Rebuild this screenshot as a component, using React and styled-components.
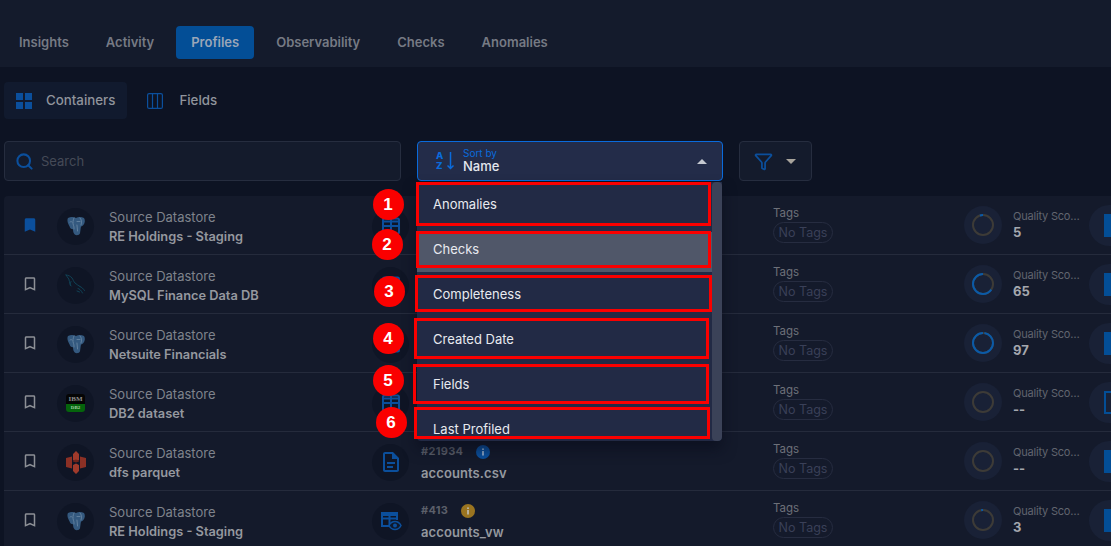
import React from "react";
import styled, { createGlobalStyle } from "styled-components";
import { Search, Funnel } from "lucide-react";

const GlobalStyle = createGlobalStyle`
  html, body {
    margin: 0;
    height: 100%;
    overflow: hidden;
    background: #0d1323;
  }
  * { box-sizing: border-box; }
`;

const tabs = ["Insights", "Activity", "Profiles", "Observability", "Checks", "Anomalies"];
const sortOptions = ["Anomalies", "Checks", "Completeness", "Created Date", "Fields", "Last Profiled"];

const rows = [
  { name: "RE Holdings - Staging", logo: "postgres", icon: "table", score: 5, saved: true },
  { name: "MySQL Finance Data DB", logo: "mysql", icon: "table", score: 65 },
  { name: "Netsuite Financials", logo: "postgres", icon: "table", score: 97 },
  { name: "DB2 dataset", logo: "db2", icon: "table", score: 0, empty: true, outlined: true },
  { name: "dfs parquet", logo: "s3", icon: "file", score: 0, empty: true, id: "#21934", file: "accounts.csv", info: "#0b4f9c" },
  { name: "RE Holdings - Staging", logo: "postgres", icon: "view", score: 3, id: "#413", file: "accounts_vw", info: "#9a7420" },
];

// red annotation boxes and number badges drawn on top of the screenshot
const marks = [
  { n: 1, x: 416, y: 182, w: 295, h: 44, cx: 388, cy: 204 },
  { n: 2, x: 416, y: 231, w: 295, h: 37, cx: 387, cy: 244 },
  { n: 3, x: 415, y: 275, w: 297, h: 37, cx: 389, cy: 291 },
  { n: 4, x: 414, y: 318, w: 295, h: 41, cx: 388, cy: 338 },
  { n: 5, x: 413, y: 364, w: 296, h: 40, cx: 388, cy: 380 },
  { n: 6, x: 414, y: 407, w: 296, h: 32, cx: 391, cy: 422 },
];

const BookmarkIcon = ({ filled }) => (
  <svg width="18" height="18" viewBox="0 0 24 24" fill={filled ? "#0b4f9c" : "#8d9096"}>
    {filled ? (
      <path d="M17 3H7c-1.100 0-2 .9-2 2v16l7-3 7 3V5c0-1.100-.9-2-2-2z" />
    ) : (
      <path d="M17 3H7c-1.100 0-2 .9-2 2v16l7-3 7 3V5c0-1.100-.9-2-2-2zm0 15l-5-2.180L7 18V5h10v13z" />
    )}
  </svg>
);

const PostgresLogo = () => (
  <svg width="20" height="20" viewBox="0 0 20 20">
    <path
      d="M2 2C5 .5 8 1 10 2c2-1 5-1.500 8 0 1.500 2 1 5.500-1 7.500l-1.500.8c-.5.3-.7 1-.8 2l-.7 5c-.5 2-4 2.500-5.500 1-1-1-1.500-3-1.500-5-2 0-3-1-3.500-3C2.500 8 .5 5 2 2z"
      fill="#34597f"
    />
    <path
      d="M8 2C7 4 6.500 7 7.500 9.500c.4 1 .5 2 .5 3.500M14 2c1.500 1.500 2 4 1 7M11 5.500h3M4 6c.8-.5 1.500-.5 2 0M11 9c.5 2 0 4 .5 6"
      fill="none"
      stroke="#6d8aa6"
      strokeWidth="0.8"
      strokeLinecap="round"
    />
  </svg>
);

const MysqlLogo = () => (
  <svg width="24" height="24" viewBox="0 0 24 24" fill="none" stroke="#10465a" strokeWidth="0.9" strokeLinecap="round">
    <path d="M2 2c2.500.2 4.500 1.200 6 3 1.200 1.600 1.500 3.500 3 5 1.500 1.600 3.500 2.300 5 3.500" />
    <path d="M2 2c.5 1.500 2 2.500 2.800 4 .8 1.700.6 3.500 1.200 5.200.3.800.7 1.300 1.200 1.800" />
    <path d="M7 8.500c-.6 1.300-.8 2.500-.6 3.800M16 13.500c1.600.7 3.200 2 4.500 4M14 15.500c1.500.4 3 1.500 4.500 4.500M13 18l2.500 1" />
  </svg>
);

const S3Logo = () => (
  <svg width="20" height="23" viewBox="0 0 20 23">
    <path d="M0 7l6-1.500v12L0 16z" fill="#8b3025" />
    <path d="M20 7l-6-1.500v12l6-1.500z" fill="#8b3025" />
    <path d="M7 3l3-3 3 3v6l-3 1.500L7 9zM7 14l3-1.500 3 1.500v6l-3 3-3-3z" fill="#a03a2b" />
    <path d="M7 9.500l3-1 3 1v1l-3 1-3-1z" fill="#6f241b" />
  </svg>
);

const TableIcon = () => (
  <svg width="20" height="18" viewBox="0 0 20 18" fill="none" stroke="#0b4f9c" strokeWidth="2">
    <rect x="2" y="1.500" width="16" height="15" rx="1.500" />
    <path d="M2 9h16M10 1.500v15M2 4.500h16" />
  </svg>
);

const ViewTableIcon = () => (
  <svg width="22" height="20" viewBox="0 0 22 20">
    <g fill="none" stroke="#0b4f9c" strokeWidth="2">
      <path d="M9 15H2V2h15v7" />
      <path d="M2 7.500h15M9.500 2v13M2 4h15" />
    </g>
    <path d="M15 10.500c-3 0-5 2-6 4 1 2 3 4 6 4s5-2 6-4c-1-2-3-4-6-4z" fill="#10192c" stroke="#0b4f9c" strokeWidth="1.500" />
    <circle cx="15" cy="14.500" r="2" fill="#0b4f9c" />
  </svg>
);

const FileIcon = () => (
  <svg width="24" height="24" viewBox="0 0 24 24" fill="#0b4f9c">
    <path d="M8 16h6v2H8zm0-4h8v2H8zm6-10H6c-1.100 0-2 .9-2 2v16c0 1.100.89 2 1.990 2H18c1.100 0 2-.9 2-2V8l-6-6zm4 18H6V4h7v5h5v11z" />
  </svg>
);

const InfoIcon = ({ color }) => (
  <svg width="14" height="14" viewBox="0 0 14 14">
    <circle cx="7" cy="7" r="7" fill={color} />
    <rect x="6.200" y="6" width="1.600" height="4.500" fill="#c9d3e0" opacity="0.8" />
    <rect x="6.200" y="3.400" width="1.600" height="1.600" fill="#c9d3e0" opacity="0.8" />
  </svg>
);

const ScoreRing = ({ score }) => {
  const length = 2 * Math.PI * 10;
  return (
    <svg width="24" height="24" viewBox="0 0 24 24" fill="none" strokeWidth="2">
      <circle cx="12" cy="12" r="10" stroke="#3d3b37" />
      <circle
        cx="12"
        cy="12"
        r="10"
        stroke="#0a5aa8"
        strokeDasharray={`${(length * score) / 100} ${length}`}
        transform="rotate(-90 12 12) scale(1 -1) translate(0 -24)"
      />
    </svg>
  );
};

const Db2Box = () => (
  <Db2Wrap>
    <Db2Top>IBM</Db2Top>
    <Db2Bottom>DB2</Db2Bottom>
  </Db2Wrap>
);

const logos = {
  postgres: <PostgresLogo />,
  mysql: <MysqlLogo />,
  s3: <S3Logo />,
  db2: <Db2Box />,
};

const icons = {
  table: <TableIcon />,
  file: <FileIcon />,
  view: <ViewTableIcon />,
};

const App = () => {
  return (
    <Page>
      <GlobalStyle />
      <Nav>
        {tabs.map((t) => (
          <Tab key={t} $active={t === "Profiles"}>
            {t}
          </Tab>
        ))}
      </Nav>

      <SubTabs>
        <SubTab $active>
          <svg width="16" height="16" viewBox="0 0 16 16" fill="#0b4f9c">
            <path d="M0 0h7v7H0zM9 0h7v7H9zM0 9h7v7H0zM9 9h7v7H9z" />
          </svg>
          <SubTabLabel>Containers</SubTabLabel>
        </SubTab>
        <SubTab>
          <svg width="16" height="16" viewBox="0 0 16 16" fill="none" stroke="#0b4f9c" strokeWidth="1.200">
            <rect x="0.600" y="0.600" width="14.800" height="14.800" rx="1.500" />
            <path d="M5.500 0.600v14.800M10.500 0.600v14.800" />
          </svg>
          <SubTabLabel>Fields</SubTabLabel>
        </SubTab>
      </SubTabs>

      <Toolbar>
        <SearchBox>
          <Search size={19} color="#0b4f9c" strokeWidth={2.6} />
          <SearchText>Search</SearchText>
        </SearchBox>
        <SortWrap>
          <SortSelect>
            <AzIcon>
              <AzLetters>
                <span>A</span>
                <span>Z</span>
              </AzLetters>
              <svg width="7" height="18" viewBox="0 0 7 18" fill="none" stroke="#0a6bdc" strokeWidth="1.500">
                <path d="M3.500 0v16.500M0.500 13.500l3 3 3-3" />
              </svg>
            </AzIcon>
            <SortLabels>
              <SortSmall>Sort by</SortSmall>
              <SortValue>Name</SortValue>
            </SortLabels>
            <Caret $up />
          </SortSelect>
          <Menu>
            <MenuList>
              {sortOptions.map((o) => (
                <MenuItem key={o} $active={o === "Checks"}>
                  {o}
                </MenuItem>
              ))}
            </MenuList>
            <ScrollTrack />
          </Menu>
        </SortWrap>
        <FilterButton>
          <Funnel size={19} color="#0b4f9c" strokeWidth={2.2} />
          <Caret />
        </FilterButton>
      </Toolbar>

      <List>
        {rows.map((r, i) => (
          <Row key={i}>
            <BookmarkCell>
              <BookmarkIcon filled={r.saved} />
            </BookmarkCell>
            <LogoCircle>{logos[r.logo]}</LogoCircle>
            <Source>
              <SourceLabel>Source Datastore</SourceLabel>
              <SourceName>{r.name}</SourceName>
            </Source>
            <LogoCircle>{icons[r.icon]}</LogoCircle>
            <Container>
              {r.id && (
                <>
                  <IdLine>
                    {r.id}
                    <InfoIcon color={r.info} />
                  </IdLine>
                  <FileName>{r.file}</FileName>
                </>
              )}
            </Container>
            <TagsCell>
              <TagsLabel>Tags</TagsLabel>
              <TagPill>No Tags</TagPill>
            </TagsCell>
            <RingCircle>
              <ScoreRing score={r.score} />
            </RingCircle>
            <Quality>
              <QualityLabel>Quality Score</QualityLabel>
              <QualityValue>{r.empty ? "--" : r.score}</QualityValue>
            </Quality>
            <Tail>
              <TailBlock $outlined={r.outlined} />
            </Tail>
          </Row>
        ))}
      </List>

      {marks.map((m) => (
        <React.Fragment key={m.n}>
          <RedBox $x={m.x} $y={m.y} $w={m.w} $h={m.h} />
          <Badge $x={m.cx} $y={m.cy}>
            {m.n}
          </Badge>
        </React.Fragment>
      ))}
    </Page>
  );
};

const Page = styled.div`
  position: relative;
  width: 1111px;
  height: 546px;
  overflow: hidden;
  background: #0d1323;
  font-family: Inter, "Open Sans", sans-serif;
`;

const Nav = styled.div`
  display: flex;
  align-items: flex-start;
  gap: 7px;
  height: 67px;
  padding: 26px 0 0 4px;
  background: #141b2c;
`;

const Tab = styled.div`
  height: 33px;
  padding: 0 15px;
  border-radius: 4px;
  font-size: 13px;
  font-weight: 600;
  line-height: 33px;
  color: ${(p) => (p.$active ? "#9aa6b8" : "#767a84")};
  background: ${(p) => (p.$active ? "#034e96" : "transparent")};
`;

const SubTabs = styled.div`
  display: flex;
  gap: 8px;
  margin: 15px 0 0 4px;
`;

const SubTab = styled.div`
  display: flex;
  align-items: center;
  gap: ${(p) => (p.$active ? "14px" : "16px")};
  height: 37px;
  padding: 0 12px;
  border-radius: 4px;
  font-size: 13.3px;
  font-weight: 500;
  color: #90949c;
  background: ${(p) => (p.$active ? "#111a2e" : "transparent")};
`;

const SubTabLabel = styled.span`
  margin-top: -2px;
`;

const Toolbar = styled.div`
  position: relative;
  z-index: 2;
  display: flex;
  gap: 16px;
  margin: 22px 0 0 4px;
`;

const SearchBox = styled.div`
  display: flex;
  align-items: center;
  gap: 7px;
  width: 397px;
  height: 40px;
  padding-left: 10px;
  background: #141b2c;
  border: 1px solid #262d3f;
  border-radius: 4px;
`;

const SearchText = styled.span`
  font-size: 13px;
  color: #454a57;
`;

const SortWrap = styled.div`
  position: relative;
  width: 306px;
`;

const SortSelect = styled.div`
  display: flex;
  align-items: center;
  height: 40px;
  padding: 0 15px 0 18px;
  background: #232c49;
  border: 1px solid #0a6bdc;
  border-radius: 4px;
`;

const AzIcon = styled.div`
  display: flex;
  align-items: center;
  gap: 4px;
  width: 27px;
`;

const AzLetters = styled.div`
  display: flex;
  flex-direction: column;
  font-size: 9.5px;
  font-weight: 800;
  line-height: 10px;
  color: #0a6bdc;
`;

const SortLabels = styled.div`
  display: flex;
  flex: 1;
  flex-direction: column;
  margin-top: -1px;
`;

const SortSmall = styled.span`
  font-size: 10px;
  line-height: 11px;
  color: #0a6bdc;
`;

const SortValue = styled.span`
  font-size: 13px;
  font-weight: 500;
  line-height: 15px;
  color: #e4e7ee;
`;

const Caret = styled.span`
  width: 0;
  height: 0;
  border-left: 5.500px solid transparent;
  border-right: 5.500px solid transparent;
  ${(p) =>
    p.$up
      ? "border-bottom: 5.500px solid #c4c8d0;"
      : "border-top: 5.500px solid #a8a49c;"}
`;

const Menu = styled.div`
  position: absolute;
  top: 41px;
  left: 0;
  display: flex;
  width: 305px;
  height: 259px;
  overflow: hidden;
  background: #222a45;
  border-radius: 0 0 4px 4px;
  box-shadow: 0 8px 14px rgba(8, 12, 26, 0.6);
`;

const MenuList = styled.div`
  flex: 1;
`;

const MenuItem = styled.div`
  height: 45px;
  padding: ${(p) => (p.$active ? "0 16px 5px" : "0 16px")};
  border-top: ${(p) => (p.$active ? "5px solid #222a45" : "none")};
  font-size: 13px;
  line-height: ${(p) => (p.$active ? "34px" : "44px")};
  color: #e8eaf0;
  background: ${(p) => (p.$active ? "#505769" : "transparent")};
`;

const ScrollTrack = styled.div`
  width: 10px;
  background: #3b4258;
  border-radius: 4px;
`;

const FilterButton = styled.div`
  display: flex;
  align-items: center;
  gap: 13px;
  width: 73px;
  height: 40px;
  padding-left: 14px;
  background: #141b2c;
  border: 1px solid #262d3f;
  border-radius: 4px;
`;

const List = styled.div`
  margin: 15px 0 0 4px;
  background: #141a2b;
  border-radius: 4px 0 0 0;
`;

const Row = styled.div`
  display: grid;
  grid-template-columns: 53px 52px 263px 49px 352px 191px 49px 76px 1fr;
  align-items: center;
  height: 59px;
  border-bottom: 1px solid #252b3c;
`;

const BookmarkCell = styled.div`
  display: flex;
  justify-content: center;
  padding-right: 1px;
`;

const LogoCircle = styled.div`
  display: flex;
  align-items: center;
  justify-content: center;
  width: 37px;
  height: 37px;
  margin-top: 2px;
  border-radius: 50%;
  background: #0f1525;
`;

const Source = styled.div`
  display: flex;
  flex-direction: column;
  gap: 2px;
  padding-top: 4px;
`;

const SourceLabel = styled.span`
  font-size: 13px;
  line-height: 18px;
  color: #7f838c;
`;

const SourceName = styled.span`
  font-size: 12.8px;
  font-weight: 600;
  line-height: 18px;
  color: #95989f;
`;

const Container = styled.div`
  display: flex;
  flex-direction: column;
  gap: 6px;
  padding-top: 4px;
`;

const IdLine = styled.div`
  display: flex;
  align-items: center;
  gap: 13px;
  font-size: 11px;
  font-weight: 700;
  line-height: 15px;
  letter-spacing: 0.3px;
  color: #5b5f69;
`;

const FileName = styled.span`
  font-size: 13px;
  font-weight: 600;
  line-height: 17px;
  letter-spacing: 0.1px;
  color: #95989f;
`;

const TagsCell = styled.div`
  display: flex;
  flex-direction: column;
  align-items: flex-start;
  gap: 1px;
  margin-top: -2px;
`;

const TagsLabel = styled.span`
  font-size: 11.5px;
  line-height: 15px;
  color: #6d7079;
`;

const TagPill = styled.span`
  width: 60px;
  height: 21px;
  border: 1px solid #262c40;
  border-radius: 11px;
  font-size: 12.5px;
  line-height: 19px;
  text-align: center;
  color: #3a4058;
`;

const RingCircle = styled.div`
  display: flex;
  align-items: center;
  justify-content: center;
  width: 38px;
  height: 38px;
  border-radius: 50%;
  background: #192136;
`;

const Quality = styled.div`
  display: flex;
  flex-direction: column;
`;

const QualityLabel = styled.span`
  width: 67px;
  overflow: hidden;
  font-size: 11px;
  line-height: 15px;
  letter-spacing: -0.2px;
  text-overflow: ellipsis;
  white-space: nowrap;
  color: #61656f;
`;

const QualityValue = styled.span`
  font-size: 13px;
  font-weight: 700;
  line-height: 17px;
  color: #a4a7ae;
`;

const Tail = styled.div`
  display: flex;
  align-items: center;
  width: 41px;
  height: 41px;
  padding-left: 15px;
  border-radius: 50%;
  background: #192136;
`;

const TailBlock = styled.div`
  flex: none;
  width: 23px;
  height: 23px;
  background: ${(p) => (p.$outlined ? "transparent" : "#034e96")};
  border: 2px solid #034e96;
`;

const Db2Wrap = styled.div`
  display: flex;
  flex-direction: column;
  width: 19px;
  height: 18px;
  overflow: hidden;
  border-radius: 3px;
  text-align: center;
  font-family: "Liberation Serif", serif;
  font-weight: 700;
`;

const Db2Top = styled.div`
  height: 10px;
  font-size: 7px;
  line-height: 10px;
  color: #8d8d8d;
  background: #050505;
`;

const Db2Bottom = styled.div`
  height: 8px;
  font-size: 5px;
  line-height: 8px;
  color: #a6cfa6;
  background: #05640c;
`;

const RedBox = styled.div`
  position: absolute;
  z-index: 3;
  left: ${(p) => p.$x}px;
  top: ${(p) => p.$y}px;
  width: ${(p) => p.$w}px;
  height: ${(p) => p.$h}px;
  border: 3px solid #fa0000;
`;

const Badge = styled.div`
  position: absolute;
  z-index: 4;
  left: ${(p) => p.$x - 15.5}px;
  top: ${(p) => p.$y - 15.5}px;
  width: 31px;
  height: 31px;
  border-radius: 50%;
  font-family: "Liberation Sans", sans-serif;
  font-size: 17px;
  font-weight: 700;
  line-height: 31px;
  text-align: center;
  color: #fff;
  background: #fa0000;
`;

export default App;
